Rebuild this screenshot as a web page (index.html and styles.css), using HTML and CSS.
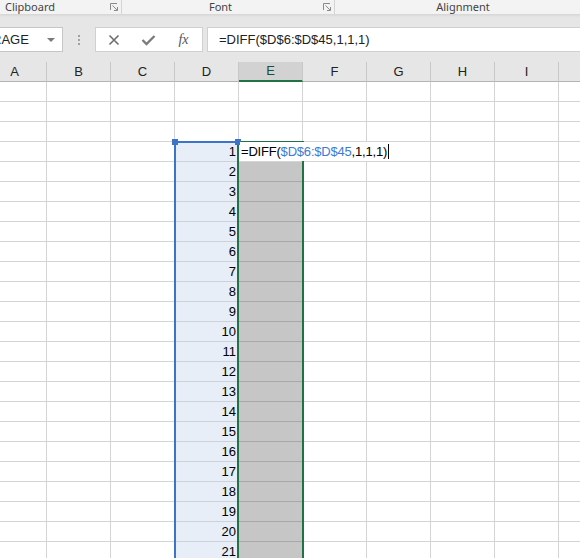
FILE: index.html
```html
<!DOCTYPE html>
<html>
<head>
  <meta charset="utf-8">
  <title>Book1 - Excel</title>
  <link rel="stylesheet" href="styles.css">
</head>
<body>
<div class="ribbon">
  <div class="ribbon-group group-clipboard">
    <span class="group-label">Clipboard</span>
    <span class="launcher">
      <svg width="8" height="8" viewBox="0 0 8 8"><path d="M0.5 7V0.5H7" fill="none" stroke="#8a8a8a"/><path d="M2.5 2.5L7 7M7.5 4V7.5H4" fill="none" stroke="#8a8a8a"/></svg>
    </span>
  </div>
  <div class="ribbon-group group-font">
    <span class="group-label">Font</span>
    <span class="launcher">
      <svg width="8" height="8" viewBox="0 0 8 8"><path d="M0.5 7V0.5H7" fill="none" stroke="#8a8a8a"/><path d="M2.5 2.5L7 7M7.5 4V7.5H4" fill="none" stroke="#8a8a8a"/></svg>
    </span>
  </div>
  <div class="ribbon-group group-alignment">
    <span class="group-label">Alignment</span>
  </div>
</div>

<div class="formula-row">
  <div class="name-box">
    <span class="name-text">AVERAGE</span>
    <span class="name-arrow"></span>
  </div>
  <div class="grip"><span class="grip-dots"></span></div>
  <div class="formula-buttons">
    <span class="fbtn">
      <svg width="12" height="12" viewBox="0 0 12 12"><path d="M1.5 1.5L10.5 10.5M10.5 1.5L1.5 10.5" stroke="#6e6e6e" stroke-width="1.6"/></svg>
    </span>
    <span class="fbtn">
      <svg width="15" height="12" viewBox="0 0 15 12"><path d="M1.5 6L5.5 10L13.5 2" fill="none" stroke="#7c7c7c" stroke-width="2.4"/></svg>
    </span>
    <span class="fbtn fx">fx</span>
  </div>
  <div class="formula-box">=DIFF($D$6:$D$45,1,1,1)</div>
</div>

<div class="sheet">
  <div class="grid" id="grid"></div>
  <div class="range-sel"></div>
  <div class="range-ref"></div>
  <div class="handle handle-left"></div>
  <div class="handle handle-right"></div>
  <div class="cell-editor">=DIFF(<span class="ref-text">$D$6:$D$45</span>,1,1,1)<span class="caret"></span></div>
</div>

<script src="script.js"></script>
</body>
</html>
```

FILE: styles.css
```css
html, body {
  margin: 0;
  padding: 0;
  width: 580px;
  height: 558px;
  overflow: hidden;
  background: #ffffff;
  font-family: "Liberation Sans", Arial, sans-serif;
}

/* ribbon group labels */
.ribbon {
  display: flex;
  height: 14px;
  background: #f3f3f3;
  border-bottom: 1px solid #d8d8d8;
  box-shadow: 0 1px 2px rgba(0, 0, 0, 0.06);
  position: relative;
  z-index: 2;
}

.ribbon-group {
  display: flex;
  flex: 0 0 auto;
  box-sizing: border-box;
  border-right: 1px solid #d4d4d4;
  height: 14px;
}

.group-clipboard {
  margin-left: -46px;
  width: 168px;
}

.group-font {
  width: 213px;
}

.group-alignment {
  width: 256px;
  border-right: none;
}

.group-label {
  flex: 1;
  text-align: center;
  font-family: "Noto Sans", "Open Sans", sans-serif;
  font-size: 11px;
  line-height: 14px;
  color: #444444;
}

.launcher {
  flex: 0 0 15px;
  display: flex;
  align-items: center;
  justify-content: center;
}

/* formula bar */
.formula-row {
  display: flex;
  background: #e6e6e6;
  padding: 12px 0 10px 0;
  height: 25px;
}

.name-box {
  flex: 0 0 99px;
  margin-left: -36px;
  box-sizing: border-box;
  background: #ffffff;
  border: 1px solid #c6c6c6;
  display: flex;
  align-items: center;
  padding-left: 2px;
}

.name-text {
  flex: 1;
  font-size: 13px;
  color: #222222;
}

.name-arrow {
  width: 0;
  height: 0;
  border-left: 4px solid transparent;
  border-right: 4px solid transparent;
  border-top: 4px solid #7a7a7a;
  margin-right: 7px;
}

.grip {
  flex: 0 0 32px;
  display: flex;
  align-items: center;
  justify-content: center;
}

.grip-dots {
  display: block;
  height: 10px;
  border-left: 2px dotted #a0a0a0;
}

.formula-buttons {
  flex: 0 0 108px;
  box-sizing: border-box;
  background: #ffffff;
  border: 1px solid #d0d0d0;
  display: flex;
}

.fbtn {
  flex: 0 0 35px;
  display: flex;
  align-items: center;
  justify-content: center;
}

.fbtn.fx {
  font-family: "Liberation Serif", "Times New Roman", serif;
  font-style: italic;
  font-size: 14px;
  color: #555555;
}

.formula-box {
  flex: 1;
  margin-left: 4px;
  margin-right: -10px;
  box-sizing: border-box;
  background: #ffffff;
  border: 1px solid #d0d0d0;
  padding-left: 11px;
  font-size: 13px;
  line-height: 23px;
  color: #222222;
  white-space: nowrap;
}

/* worksheet */
.sheet {
  position: relative;
  height: 496px;
  background: #e6e6e6;
}

.grid {
  display: grid;
  grid-template-columns: repeat(10, 64px);
  grid-auto-rows: 20px;
  margin-left: -17px;
}

.col-head {
  box-sizing: border-box;
  background: #e6e6e6;
  border-right: 1px solid #c8c8c8;
  border-bottom: 1px solid #b4b4b4;
  text-align: center;
  font-size: 13px;
  line-height: 19px;
  color: #222222;
}

.col-head-active {
  background: #d2d2d2;
  border-bottom: 2px solid #217346;
  line-height: 18px;
  color: #1d4f33;
}

.cell {
  box-sizing: border-box;
  background: #ffffff;
  border-right: 1px solid #d4d4d4;
  border-bottom: 1px solid #d4d4d4;
  text-align: right;
  padding-right: 2px;
  font-size: 13px;
  line-height: 19px;
  color: #000000;
}

.cell-ref {
  background: #e7eef8;
  border-bottom-color: #cdd2da;
}

.cell-sel {
  background: #c6c6c6;
  border-bottom-color: #a8a8a8;
}

/* overlays: selection, reference range, in-cell editor */
.range-sel {
  position: absolute;
  left: 237px;
  top: 79px;
  width: 67px;
  height: 430px;
  box-sizing: border-box;
  border: 2px solid #217346;
  border-bottom: none;
}

.range-ref {
  position: absolute;
  left: 174px;
  top: 79px;
  width: 63px;
  height: 430px;
  box-sizing: border-box;
  border-left: 2px solid #3b74c9;
  border-top: 2px solid #3b74c9;
}

.handle {
  position: absolute;
  top: 77px;
  width: 6px;
  height: 6px;
  background: #3b74c9;
}

.handle-left {
  left: 172px;
}

.handle-right {
  left: 235px;
}

.cell-editor {
  position: absolute;
  left: 240px;
  top: 80px;
  height: 19px;
  padding-left: 1px;
  background: #ffffff;
  font-size: 13px;
  line-height: 19px;
  letter-spacing: -0.2px;
  color: #000000;
  white-space: nowrap;
}

.ref-text {
  color: #3d7bd6;
}

.caret {
  display: inline-block;
  width: 1px;
  height: 15px;
  margin-left: 1px;
  vertical-align: -3px;
  background: #000000;
}
```

FILE: script.js
```js
// build the worksheet: column headers plus 24 rows
const grid = document.getElementById('grid');
// the last column sits past the right edge, its letter is never seen
const letters = ['A', 'B', 'C', 'D', 'E', 'F', 'G', 'H', 'I', ''];

letters.forEach(function (letter, i) {
  const head = document.createElement('div');
  head.className = 'col-head' + (i === 4 ? ' col-head-active' : '');
  head.textContent = letter;
  grid.appendChild(head);
});

for (let r = 0; r < 24; r++) {
  for (let c = 0; c < letters.length; c++) {
    const cell = document.createElement('div');
    cell.className = 'cell';
    if (c === 3 && r >= 3) {
      cell.className += ' cell-ref';
      cell.textContent = r - 2;
    }
    if (c === 4 && r >= 4) {
      cell.className += ' cell-sel';
    }
    grid.appendChild(cell);
  }
}
```
